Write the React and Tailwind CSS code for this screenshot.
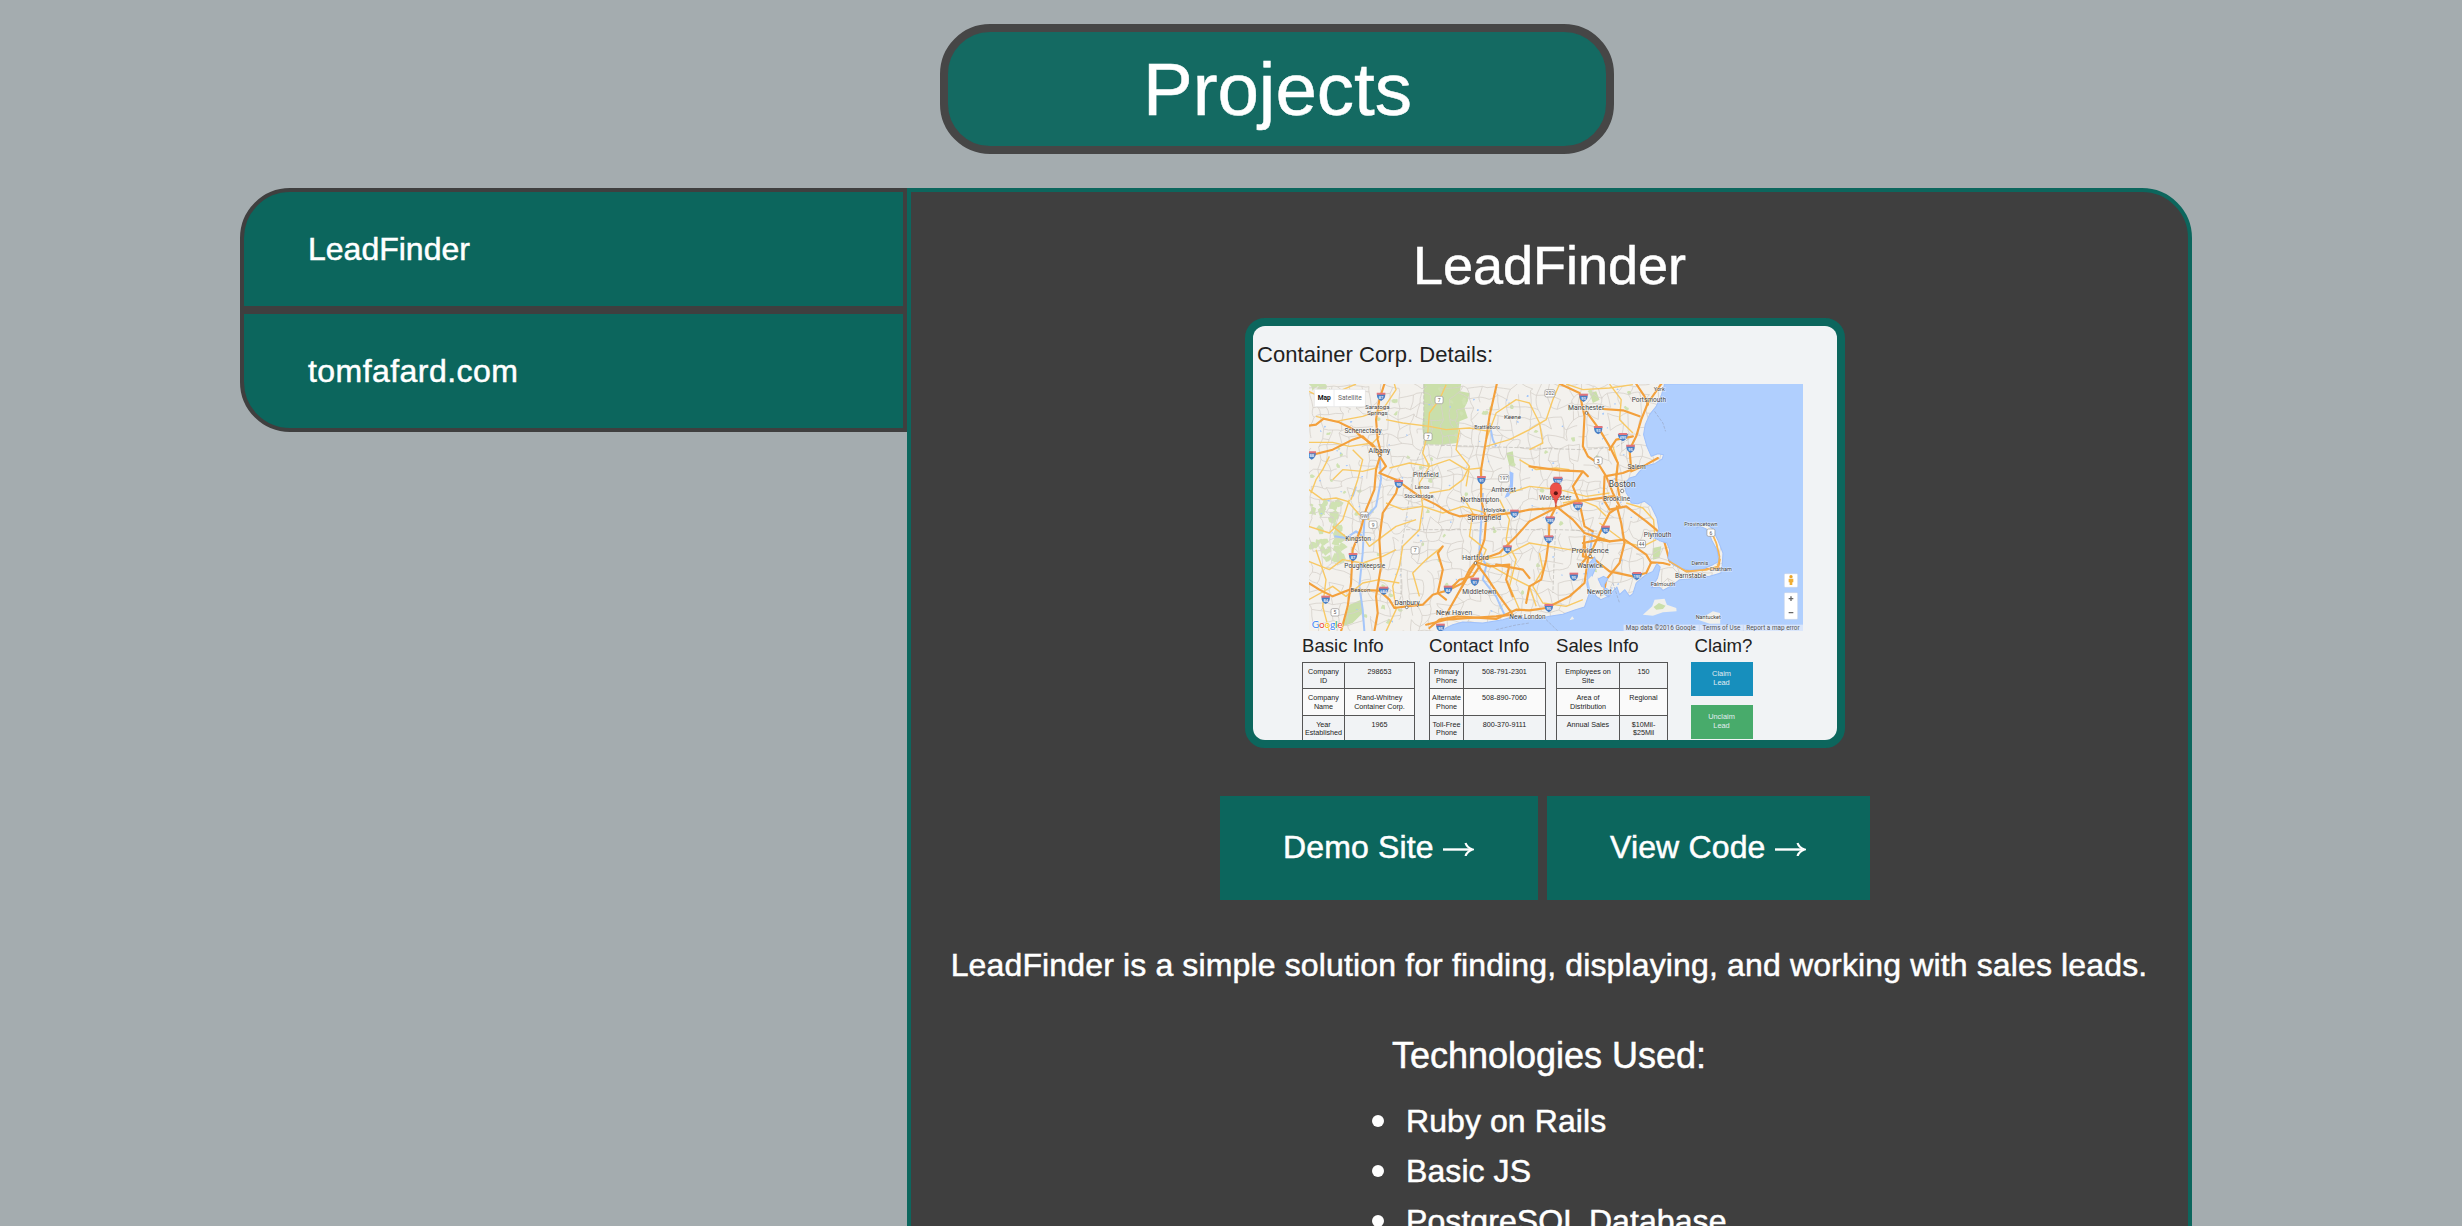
const FONT = 'font-["Liberation_Sans",Arial,sans-serif]';

function makeRandom(seed) {
  let s = seed;
  return () => {
    s = (s * 16807) % 2147483647;
    return s / 2147483647;
  };
}

const rand = makeRandom(4127);

/* Local roads: a jittered grid of short bent lines over the land. */
const localRoads = (() => {
  const nodes = [];
  for (let r = 0; r < 26; r++) {
    nodes.push([]);
    for (let c = 0; c < 52; c++) {
      nodes[r].push([-670 + c * 30 + rand() * 24, -355 + r * 31 + rand() * 24]);
    }
  }
  let d = "";
  for (let r = 0; r < 25; r++) {
    for (let c = 0; c < 51; c++) {
      const [x, y] = nodes[r][c];
      const ends = [];
      if (rand() < 0.66) ends.push(nodes[r][c + 1]);
      if (rand() < 0.66) ends.push(nodes[r + 1][c]);
      ends.forEach(([a, b]) => {
        const mx = (x + a) / 2 + (rand() - 0.5) * 14;
        const my = (y + b) / 2 + (rand() - 0.5) * 14;
        d += `M${x.toFixed(0)} ${y.toFixed(0)}Q${mx.toFixed(0)} ${my.toFixed(0)} ${a.toFixed(0)} ${b.toFixed(0)}`;
      });
    }
  }
  return d;
})();

function blobs(count, size, x0, x1, y0, y1) {
  let d = "";
  for (let i = 0; i < count; i++) {
    const x = x0 + rand() * (x1 - x0);
    const y = y0 + rand() * (y1 - y0);
    for (let k = 0; k < 7; k++) {
      const a = (k / 7) * Math.PI * 2;
      const q = size * (0.35 + rand() * 0.8);
      d += `${k ? "L" : "M"}${(x + Math.cos(a) * q).toFixed(0)} ${(y + Math.sin(a) * q).toFixed(0)}`;
    }
    d += "Z";
  }
  return d;
}

const parks = blobs(75, 8, -660, 330, -340, 380) + blobs(34, 15, -662, -560, 0, 180) + blobs(9, 16, -650, -590, -345, -290);
const lakes = blobs(90, 3.5, -650, 360, -340, 380);

const SEA =
  "M405 -347L396 -315L380 -280L360 -255L347 -225L342 -195L352 -160L365 -130L385 -138L402 -135L398 -122L375 -108L345 -100L330 -85L318 -70L300 -65L292 -55L286 -40L290 -20L300 -5L305 10L325 12L345 5L365 20L372 35L382 55L388 90L375 115L395 125L412 130L420 150L415 175L430 195L450 205L480 212L520 208L550 195L568 185L562 150L548 125L540 105L530 88L512 80L500 85L507 77L527 73L547 85L565 122L580 160L578 195L574 220L540 230L500 236L450 240L430 256L400 272L390 262L366 264L384 235L392 202L382 192L370 215L350 225L337 235L320 250L310 282L300 290L286 270L270 285L262 262L246 280L238 292L226 285L224 255L235 237L222 230L206 238L216 260L242 272L236 290L214 300L200 290L190 265L185 235L202 197L195 172L180 190L174 220L172 255L178 285L165 322L138 330L100 344L60 350L20 358L-20 355L-45 350L-80 360L-140 370L-200 367L-230 375L-250 385L-270 400H825V-350Z";

const YELLOW = [
  "M-662 -172H-590L-540 -160L-470 -170L-450 -190",
  "M-662 -325L-610 -300L-560 -330L-520 -347",
  "M-640 -250L-580 -235L-500 -250L-440 -270L-400 -330L-405 -347",
  "M-662 -30L-620 0L-580 -5L-545 5L-510 45L-480 60",
  "M-600 -130L-620 -90L-640 -60L-655 -20",
  "M-530 -150L-500 -120L-515 -60L-535 0",
  "M-430 -240L-380 -230L-300 -220L-250 -210L-180 -215L-120 -205",
  "M-250 -345L-270 -300L-300 -260L-305 -200L-320 -140L-300 -100L-330 -50L-320 20L-330 90L-380 140L-390 200L-410 260L-400 330L-430 395",
  "M-662 185L-600 210L-560 180L-500 190L-440 170L-400 150",
  "M-590 80L-540 120L-500 110L-480 140L-400 80L-340 60",
  "M-180 -100L-200 -60L-240 -30L-300 -20",
  "M-430 10L-380 30L-320 20L-260 40L-200 20L-130 40",
  "M-260 140L-310 180L-350 220L-330 290",
  "M-130 -160L-60 -180L0 -210L50 -240L70 -300L90 -347",
  "M0 -150L40 -170L30 -230L0 -290L-40 -300L-100 -260L-130 -180",
  "M-60 -20L0 -40L90 -30L170 -10L240 -20",
  "M-150 180L-80 170L0 130L60 140L120 150L180 155",
  "M-130 190L-60 230L0 260L20 320",
  "M-30 -120L20 -90L80 -95L120 -90",
  "M110 -347L160 -330L240 -335L310 -345",
  "M240 -347L275 -300L270 -240L310 -200",
  "M210 70L290 130L340 140L380 120",
  "M230 50L200 20L150 0L100 10",
  "M30 160L40 210L10 260L40 310L110 320L160 300",
  "M250 -160L265 -110L258 -70",
  "M-662 300L-590 260L-550 290L-500 250L-450 240L-390 250",
  "M-200 -10L-170 40L-180 110L-130 150L-150 200",
  "M-90 0L-60 60L-70 120L-40 180L-60 260L-30 330",
  "M430 195L470 205L530 200L570 180L560 130L545 95",
  "M290 10L340 25L372 60L375 100",
  "M-662 80L-600 100L-560 60L-540 0",
  "M-420 -95L-360 -110L-300 -100L-240 -120L-190 -90L-145 -95",
  "M-590 -60L-560 -90L-500 -85L-460 -95",
  "M-210 -210L-220 -150L-180 -100L-190 -40",
  "M-640 150L-610 240L-620 320L-600 395",
];

const ORANGE = [
  "M-662 -222L-640 -225L-617 -243L-570 -232L-530 -212L-505 -190L-470 -165L-450 -140",
  "M-662 -132L-590 -150L-530 -180L-500 -190L-470 -160",
  "M-435 -347L-450 -300L-460 -240L-455 -180L-445 -140L-460 -90L-465 -30L-490 30L-505 85L-530 150L-535 250L-545 320L-565 395",
  "M-455 -140L-430 -100L-450 -80L-400 -60L-330 -10L-280 15L-240 40L-210 50L-170 45L-140 50L-40 38L0 30L80 25L140 5L250 -10",
  "M-390 -60L-400 -20L-440 40L-450 120L-445 200L-460 290L-455 340L-465 395",
  "M-98 -347L-120 -250L-130 -180L-145 -90L-145 0L-130 60L-135 120L-160 190L-190 240L-230 310L-250 345",
  "M-662 250L-630 270L-590 290L-540 270L-450 273L-420 300L-405 325L-370 320L-320 315L-290 285L-240 270L-200 250L-180 210L-160 185L-90 160L-40 110L0 65L78 25",
  "M-260 140L-275 160L-260 210L-275 280L-250 300",
  "M-160 190L-130 230L-90 290L-50 345L-100 350L-180 355L-250 360L-310 375",
  "M-300 385L-270 360L-215 350L-100 358L-40 330L0 332L50 325L120 290L165 250L175 180L220 80L240 40L270 20",
  "M-162 187L-120 200L-60 195L-70 240L-50 290M-100 195L-20 210L0 235",
  "M80 20L60 60L58 120L50 180L35 240L0 260L-10 310",
  "M80 20L130 60L165 100L240 125L285 120L350 165L365 190",
  "M0 -100L90 -88L160 -85L175 -70M160 -85L130 -40L150 10L165 80L190 95",
  "M92 -347L150 -320L165 -250L160 -160L175 -130L205 -110L230 -70L250 -20L265 10L270 20",
  "M170 -265L210 -210L240 -160L265 -110L260 -60L270 -10",
  "M220 -272L280 -268L330 -250M395 -347L355 -290L335 -240L320 -190L300 -150L305 -90L280 -80L225 -70L222 0L240 30L290 20L350 65L380 90L400 110L420 185L470 215L565 205L570 180",
  "M320 -347L345 -310L355 -285M310 -190L260 -180L240 -150",
  "M165 110L160 170L190 175L240 215L310 230L350 220L365 188L400 190L420 195",
  "M262 20L275 70L285 130L270 190L230 240L225 270",
  "M-150 200L-170 230L-210 240L-235 265M305 -85L350 -105L385 -125",
  "M160 130L210 120L240 125M150 200L170 175L165 130",
];

const RIVERS = [
  "M-450 -140L-445 -60L-460 20L-495 60L-500 160L-510 260L-500 330L-495 395",
  "M-140 -20L-145 70L-150 150L-130 200L-140 240L-100 290L-75 345",
  "M-585 110L-550 115L-520 95L-500 110M-530 -10L-520 -40",
  "M190 90L180 170M-120 -230L-110 -180L-100 -160",
];

const SHIELDS = [
  ["87", -445, -309], ["88", -653, -133], ["90", -392, -47], ["91", -144, -59], ["90", -45, 42], ["87", -529, 172],
  ["84", -611, 300], ["684", -437, 273], ["84", -244, 270], ["91", -164, 246], ["84", -66, 149], ["95", -267, 384],
  ["93", 162, -306], ["93", 206, -209], ["95", 303, -153], ["190", 85, -57], ["495", 145, 20], ["395", 62, 62],
  ["395", 58, 119], ["95", 228, 90], ["495", 280, -188], ["95", 133, 231], ["195", 322, 229], ["95", 58, 325],
];

const ROUTES = [
  ["7", -271, -299], ["7", -304, -189], ["202", 61, -319], ["3", 206, -117], ["9W", -495, 48], ["9", -469, 75],
  ["7", -343, 152], ["197", -77, -64], ["44", 336, 133], ["6", 544, 99], ["5", -583, 338],
];

const PLACES = [
  ["Saratoga", -456, -272, 17], ["Springs", -456, -254, 17], ["Schenectady", -499, -200, 18], ["Albany", -450, -141, 20],
  ["Pittsfield", -311, -67, 18], ["Lenox", -322, -31, 15], ["Stockbridge", -332, -6, 15], ["Keene", -51, -242, 17],
  ["Brattleboro", -127, -213, 14], ["Northampton", -149, 7, 18], ["Amherst", -78, -24, 18], ["Holyoke", -105, 37, 17],
  ["Springfield", -136, 60, 20], ["Hartford", -162, 182, 20], ["Middletown", -151, 284, 18], ["New Haven", -226, 346, 20],
  ["New London", -6, 358, 18], ["Danbury", -367, 316, 19], ["Beacon", -507, 277, 16], ["Poughkeepsie", -494, 206, 18],
  ["Kingston", -514, 125, 18], ["Manchester", 170, -268, 19], ["Portsmouth", 358, -294, 18], ["York", 389, -326, 15],
  ["Salem", 321, -91, 18], ["Boston", 278, -37, 24], ["Brookline", 261, 5, 18], ["Worcester", 77, 1, 20],
  ["Provincetown", 514, 78, 15], ["Plymouth", 384, 113, 18], ["Providence", 182, 160, 21], ["Warwick", 181, 206, 19],
  ["Newport", 210, 282, 18], ["Falmouth", 400, 260, 16], ["Barnstable", 483, 234, 18], ["Dennis", 511, 195, 15],
  ["Chatham", 573, 215, 15], ["Nantucket", 536, 358, 15],
];

const GOOGLE = [["G", "#4285f4"], ["o", "#ea4335"], ["o", "#fbbc05"], ["g", "#4285f4"], ["l", "#34a853"], ["e", "#ea4335"]];

function RoadMap() {
  return (
    <svg className="block h-[247px] w-[494px]" viewBox="-661 -347 1481 741" preserveAspectRatio="none" fontFamily="Roboto, sans-serif">
      <rect x="-662" y="-348" width="1484" height="745" fill="#f3f1ed" />
      <path d="M-317 -347H-205L-208 -325L-180 -320L-185 -295L-195 -275L-185 -245L-210 -235L-218 -170L-260 -165L-315 -166L-322 -220L-317 -260Z" fill="#cadfaa" />
      <path d="M-70 -140L-50 -145L-45 -110L-60 -100ZM180 -320L200 -325L210 -300L190 -290ZM370 145L395 140L390 175L370 180ZM-540 315L-505 300L-500 340L-530 370L-560 380Z" fill="#cadfaa" />
      <path d={parks} fill="#cfe2b2" />
      <path d={localRoads} fill="none" stroke="#d5d1ca" strokeWidth="2.4" />
      <path d={lakes} fill="#a5c8fb" />
      <path d="M-60 -85L-48 -80L-50 -30L-62 -10L-75 -5L-58 -45Z" fill="#a0c3ff" />
      <path d="M-317 -347V-165L-345 -100L-385 150V290L-400 330M-317 -165L160 -150L260 -158L310 -190M-370 90L-130 90L90 90L220 95M78 90L70 280" fill="none" stroke="#bdb9b4" strokeWidth="2" strokeDasharray="12 5" />
      {RIVERS.map((d) => <path key={d} d={d} fill="none" stroke="#a5c6fa" strokeWidth="6" strokeLinejoin="round" />)}
      {YELLOW.map((d) => <path key={d} d={d} fill="none" stroke="#f8c965" strokeWidth="4.2" strokeLinejoin="round" />)}
      {ORANGE.map((d) => <path key={d} d={d} fill="none" stroke="#f3a03c" strokeWidth="6.4" strokeLinejoin="round" strokeLinecap="round" />)}
      <path d={SEA} fill="#b0cffe" stroke="#9fc0fa" strokeWidth="3" strokeLinejoin="round" />
      <path d="M340 345L368 320L375 300L405 297L412 315L440 325L441 335L400 338L370 348ZM505 360L530 347L550 335L571 340L572 372L540 372ZM176 240L186 228L200 250L196 285L182 270ZM120 362L128 350L134 358Z" fill="#f1f0eb" />
      <path d="M372 322L388 310L408 318L400 328L380 330Z" fill="#cadfaa" />
      <path d="M-100 390L-40 376L0 370M50 360L85 394M250 250L270 310M375 -265L400 -230L408 -205" fill="none" stroke="#9aa8c4" strokeWidth="2" strokeDasharray="9 4" />
      <path d="M420 185L470 215L530 210L566 200L570 170L560 130L545 95" fill="none" stroke="#f6b455" strokeWidth="4.5" strokeLinejoin="round" />
      {SHIELDS.map(([t, x, y]) => (
        <g key={`${x},${y}`}>
          <path d={`M${x - 12 - (t.length > 2 ? 3 : 0)} ${y - 9}H${x + 12 + (t.length > 2 ? 3 : 0)}Q${x + 15} ${y + 5} ${x} ${y + 13}Q${x - 15} ${y + 5} ${x - 12 - (t.length > 2 ? 3 : 0)} ${y - 9}Z`} fill="#4a7fc4" />
          <path d={`M${x - 13} ${y - 12}H${x + 13}V${y - 6}H${x - 13}Z`} fill="#e0747c" />
          <text x={x} y={y + 6} textAnchor="middle" fontSize="12" fontWeight="700" fill="#e6eefb">{t}</text>
        </g>
      ))}
      {ROUTES.map(([t, x, y]) => (
        <g key={`${x},${y}`}>
          <rect x={x - 12 - (t.length > 2 ? 3 : 0)} y={y - 11} width={t.length > 2 ? 30 : 24} height="22" rx="5" fill="#fff" stroke="#96938f" strokeWidth="2" />
          <text x={x} y={y + 6} textAnchor="middle" fontSize="15" fill="#555">{t}</text>
        </g>
      ))}
      {PLACES.map(([t, x, y, s]) => (
        <text key={t} x={x} y={y} textAnchor="middle" fontSize={s + 1.5} fill="#444" stroke="#ffffff" strokeWidth="3" strokeOpacity=".6" paintOrder="stroke">{t}</text>
      ))}
      <g fill="#fff" stroke="#555" strokeWidth="2">
        <circle cx="-449" cy="-133" r="4" /><circle cx="-162" cy="190" r="4" /><circle cx="278" cy="-26" r="5" /><circle cx="182" cy="170" r="4" /><circle cx="-368" cy="323" r="4" /><circle cx="171" cy="-260" r="4" />
      </g>
      <path d="M79 23Q77 0 68 -9Q60 -20 63 -28A17 17 0 1 1 95 -28Q98 -20 90 -9Q81 0 79 23Z" fill="#ed5148" stroke="#b93d37" strokeWidth="1.5" />
      <circle cx="79" cy="-19" r="6" fill="#5c1714" />
      <rect x="-645" y="-331" width="153" height="52" rx="3" fill="#fff" stroke="#d8d8d8" strokeWidth="1.5" />
      <path d="M-586 -330V-280" stroke="#e3e3e3" strokeWidth="2" />
      <text x="-635" y="-298" fontSize="20" fontWeight="700" fill="#111">Map</text>
      <text x="-574" y="-298" fontSize="20" fill="#666" textLength="71">Satellite</text>
      <text x="-653" y="384" fontSize="31" fontFamily="Lato, sans-serif" stroke="#fff" strokeWidth="3" paintOrder="stroke" textLength="93">
        {GOOGLE.map(([c, f], i) => <tspan key={i} fill={f}>{c}</tspan>)}
      </text>
      <g fill="#fff" stroke="#c9d3e2" strokeWidth="1.5">
        <rect x="764" y="222" width="40" height="41" rx="3" />
        <rect x="764" y="279" width="40" height="80" rx="3" />
      </g>
      <circle cx="784" cy="231" r="5" fill="#e9a52b" />
      <path d="M777 237H791V248H788V256H780V248H777Z" fill="#f0ae33" />
      <path d="M777 297H791M784 290V304M777 339H791" stroke="#666" strokeWidth="4" />
      <rect x="282" y="375" width="540" height="21" fill="#e2eafa" fillOpacity=".85" />
      <path d="M509 376V395M641 376V395" stroke="#c6d2e8" strokeWidth="2" />
      <g fontSize="19" fill="#555">
        <text x="289" y="390" textLength="209">Map data ©2016 Google</text>
        <text x="519" y="390" textLength="113">Terms of Use</text>
        <text x="650" y="390" textLength="160">Report a map error</text>
      </g>
    </svg>
  );
}

function InfoTable({ title, rows, columns, className }) {
  return (
    <div className={className}>
      <h4 className="h-[24px] whitespace-nowrap text-[18.6px] leading-[24px] text-[#222]">{title}</h4>
      <div className="mt-[4px] border border-[#555] text-center text-[7.2px] leading-[8.6px] text-[#222]">
        {rows.map(([a, b], i) => (
          <div key={a} className={`grid h-[26.3px] border-b border-[#555] ${columns} ${i === 1 ? "bg-[#fafafa]" : ""}`}>
            <div className="whitespace-pre border-r border-[#555] pt-[5px]">{a}</div>
            <div className="whitespace-pre pt-[5px]">{b}</div>
          </div>
        ))}
      </div>
    </div>
  );
}

function Preview() {
  return (
    <div className="ml-[334px] mt-[22px] h-[430px] w-[600px] rounded-[20px] border-8 border-[#0c665d] bg-[#0c665d]">
      <div className="h-[414px] w-[584px] overflow-hidden rounded-[12px] bg-[#f1f3f5]">
        <h3 className="ml-[4px] mt-[14px] h-[30px] text-[22px] leading-[30px] tracking-[0.06px] text-[#222]">Container Corp. Details:</h3>
        <div className="ml-[56px] mt-[14px]">
          <RoadMap />
        </div>
        <div className="ml-[49px] mt-[3px] flex items-start">
          <InfoTable
            title="Basic Info"
            className="w-[113px]"
            columns="grid-cols-[42px_1fr]"
            rows={[["Company\nID", "298653"], ["Company\nName", "Rand-Whitney\nContainer Corp."], ["Year\nEstablished", "1965"]]}
          />
          <InfoTable
            title="Contact Info"
            className="ml-[14px] w-[117px]"
            columns="grid-cols-[34px_1fr]"
            rows={[["Primary\nPhone", "508-791-2301"], ["Alternate\nPhone", "508-890-7060"], ["Toll-Free\nPhone", "800-370-9111"]]}
          />
          <InfoTable
            title="Sales Info"
            className="ml-[10px] w-[112px]"
            columns="grid-cols-[63px_1fr]"
            rows={[["Employees on\nSite", "150"], ["Area of\nDistribution", "Regional"], ["Annual Sales", "$10Mil-\n$25Mil"]]}
          />
          <div className="ml-[22.5px] w-[62px] text-center text-[7.4px] leading-[8.6px] text-[#e3edf2]">
            <h4 className="ml-[4px] h-[24px] text-left text-[18.6px] leading-[24px] text-[#222]">Claim?</h4>
            <div className="mt-[4px] h-[34px] whitespace-pre bg-[#178fbd] pt-[8px]">{"Claim\nLead"}</div>
            <div className="mt-[9px] h-[34px] whitespace-pre bg-[#48ab6b] pt-[8px]">{"Unclaim\nLead"}</div>
          </div>
        </div>
      </div>
    </div>
  );
}

function ProjectTab({ label, className }) {
  return (
    <div className={`h-[122px] border-4 border-[#3f3f3f] bg-[#0c665d] pl-[64px] text-[32px] leading-[114px] ${className}`}>{label}</div>
  );
}

function LinkButton({ label, className }) {
  return (
    <div className={`flex h-[104px] bg-[#0c665d] pl-[63px] text-[32px] leading-[102px] ${className}`}>
      <span className="tracking-[0.15px]">{label}</span>
      <svg className="ml-[9px] mt-[46px] h-[14px] w-[31px]" viewBox="0 0 31 14" fill="none" stroke="#fff" strokeWidth="2.4" aria-label="→">
        <path d="M0 7.5H28" />
        <path d="M22.5 1Q24 5.5 29.5 7.5Q24 9.5 22.5 14" strokeWidth="2.2" />
      </svg>
    </div>
  );
}

export default function App() {
  return (
    <div className={`h-[1226px] w-[2462px] overflow-hidden bg-[#a4acaf] pt-6 text-white [-webkit-text-stroke-width:0.5px] ${FONT}`}>
      <h1 className="ml-[940px] h-[130px] w-[674px] rounded-[50px] border-8 border-[#464646] bg-[#146a62] pl-px text-center text-[74.5px] leading-[116px]">
        Projects
      </h1>
      <div className="ml-[240px] mt-[34px] flex items-start">
        <nav className="w-[667px]">
          <ProjectTab label="LeadFinder" className="rounded-tl-[50px]" />
          <ProjectTab label="tomfafard.com" className="rounded-bl-[50px] tracking-[0.45px]" />
        </nav>
        <section className="h-[1100px] w-[1285px] rounded-tr-[50px] border-4 border-[#0c665d] bg-[#3f3f3f]">
          <h2 className="mt-[43px] h-[61px] text-center text-[54px] leading-[60px]">LeadFinder</h2>
          <div className="[-webkit-text-stroke-width:0px]">
            <Preview />
          </div>
          <div className="ml-[309px] mt-[48px] flex gap-[9px]">
            <LinkButton label="Demo Site" className="w-[318px]" />
            <LinkButton label="View Code" className="w-[323px]" />
          </div>
          <p className="mt-[40px] h-[50px] whitespace-nowrap pr-px text-center text-[32px] leading-[50px] tracking-[0.14px]">
            LeadFinder is a simple solution for finding, displaying, and working with sales leads.
          </p>
          <h3 className="mt-[41px] h-[50px] pr-px text-center text-[36px] leading-[50px]">Technologies Used:</h3>
          <ul className="ml-[461px] mt-[15px] text-[32px] leading-[50px] tracking-[0.08px]">
            {["Ruby on Rails", "Basic JS", "PostgreSQL Database"].map((item) => (
              <li key={item} className="flex h-[50px] items-center gap-[22px]">
                <span className="size-3 rounded-full bg-white" />
                <span>{item}</span>
              </li>
            ))}
          </ul>
        </section>
      </div>
    </div>
  );
}
